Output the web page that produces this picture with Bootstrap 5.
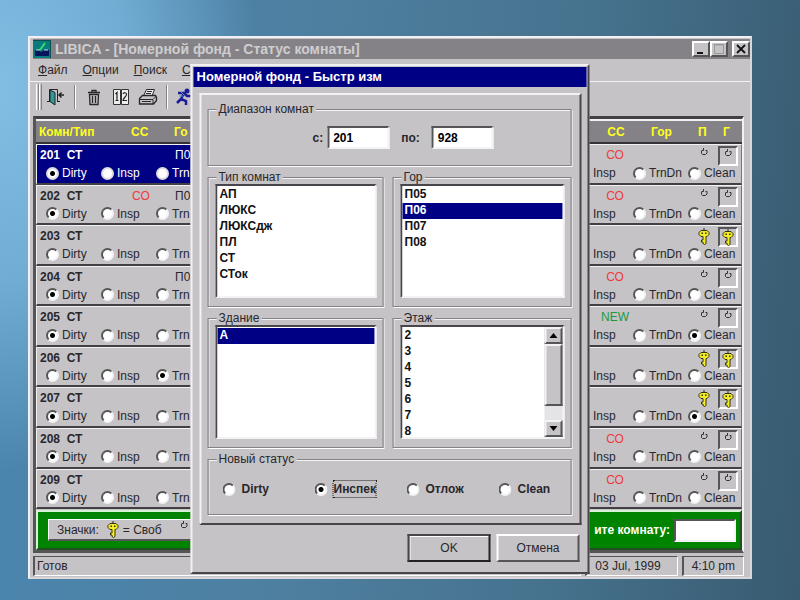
<!DOCTYPE html>
<html lang="ru">
<head>
<meta charset="utf-8">
<meta name="viewport" content="width=device-width, initial-scale=1">
<title>LIBICA - Номерной фонд</title>
<link href="https://cdn.jsdelivr.net/npm/bootstrap@5.3.0/dist/css/bootstrap.min.css" rel="stylesheet">
<style>
:root{--face:#c5c3c6;--dark:#424045;--mid:#848286;--lite:#f1f0f2;--navy:#000084}
body{font-family:"Liberation Sans",Arial,sans-serif;font-size:12px;line-height:16px;color:#29272b;
  background:radial-gradient(ellipse 260px 380px at 0 15%,#82bde4 0,rgba(122,182,222,.8) 50%,rgba(85,137,170,0) 100%),linear-gradient(95deg,#4a86b0 0,#4e7f9f 40%,#45718c 72%,#385b70 100%)}
.desk{padding:36px 48px 21px 28px}
.win{background:var(--face);border:2px solid var(--lite);border-right-color:#d9d7da;border-bottom-color:#d9d7da}
.win-title{background:var(--mid);color:#cfcdd0;height:20px;margin:1px 0 0 3px;font-size:14px}
.sys-btn{width:18px;height:16px;padding:0;background:var(--face);border:2px solid;border-color:#fff #555 #555 #fff;line-height:0}
.menu{height:23px;padding:0 8px;gap:15px;border-bottom:1px solid var(--lite)}
.menu a{color:#29272b;text-decoration:none}
.tools{height:34px;padding:0 6px 4px}
.tool{background:none;border:0;padding:0;line-height:0}
.grip{width:3px;height:26px;border-left:1px solid #fff;border-right:1px solid var(--mid)}
.vline{width:2px;height:24px;border-left:1px solid var(--mid);border-right:1px solid #fff}
.board{margin:0 6px 0 3px;border:3px solid;border-color:var(--dark) #f1f0f2 #555 #555;border-right-width:2px}
.heads{background:var(--mid);color:#ffff20;height:25px;border-top:2px solid var(--lite);border-bottom:2px solid #343236}
.room{flex:1 1 0;border:1px solid;border-color:var(--lite) #777 var(--dark) var(--lite);border-bottom-width:2px}
.room.on .lhalf{background:var(--navy);color:#fff}
.lhalf{width:155px;padding-left:3px}
.rhalf{width:153px}
.lgrid{display:grid;grid-template-columns:92px 43px 18px}
.rgrid{display:grid;grid-template-columns:54px 55px 21px 20px}
.lradios{display:grid;grid-template-columns:55px 55px 32px;padding-left:6px}
.rradios{display:grid;grid-template-columns:40px 55px 52px;padding-left:5px}
.line1{height:19px;padding-top:2px}
.opt{display:flex;align-items:center;gap:3px;height:18px}
.opt input{appearance:none;flex:none;width:13px;height:13px;margin:0;border-radius:50%;border:2px solid;border-color:#555 #f3f2f4 #f3f2f4 #555;background:#fff}
.opt input:checked{background:radial-gradient(circle,#000 0,#000 2px,#fff 3px)}
.on .lhalf .opt input{border-color:#ddd}
.slot{width:20px;height:20px;border:2px solid;border-color:#555 #fff #fff #555;line-height:0;margin-top:-1px}
.pic{line-height:0;padding-left:1px}
.bar{height:40px;background:#008400;border:2px solid;border-color:#d8f0d8 #234d23 #234d23 #d8f0d8;margin-top:1px}
.legend-box{width:155px;height:22px;margin-left:10px;padding-left:8px;background:var(--face);border:1px solid #fff;border-bottom:2px solid #555}
.field{background:#fff;border:2px solid;border-color:#555 #f3f2f4 #f3f2f4 #555;border-radius:0;height:23px;width:62px;padding:0 4px;outline:0;color:#000}
.stat{height:20px;margin:3px 6px 1px 3px;gap:4px}
.stat>div{border:1px solid;border-color:#555 #fff #fff #555;border-left-width:2px;padding:1px 2px}
.dlg{width:399px;top:26px;background:var(--face);border:2px solid;border-color:#f1f0f2 #48464b #48464b #f1f0f2;padding:1px}
.dlg-title{background:var(--navy);color:#fff;height:20px;font-size:13px;line-height:19px;padding-left:3px;margin:0}
.pane{margin:6px 5px 9px 6px;padding:7px 8px 8px 6px;border:2px solid;border-color:#f3f2f4 #48464b #48464b #f3f2f4;display:grid;gap:4px}
.pair{display:grid;grid-template-columns:176fr 179fr;gap:9px}
.group{border:1px solid var(--mid);box-shadow:1px 1px 0 #fff,inset 1px 1px 0 #f3f2f4;padding:0 6px 8px 7px;min-width:0}
.group legend{float:none;width:auto;font-size:12px;line-height:14px;height:14px;padding:0 2px;margin:0 0 0 1px;background:var(--face)}
.range{padding:10px 0 16px 97px;gap:12px}
.lbox{height:114px;border:2px solid;border-color:#48464b #f3f2f4 #f3f2f4 #48464b;background:#fff}
.lbox select{appearance:none;border:0;padding:1px 0 0;outline:0;background:#fff;width:100%;height:100%;overflow:hidden;color:#111;font-size:12px;border-radius:0}
.lbox option{height:16px;min-height:16px;line-height:16px;padding:0 2px;font-weight:700}
.lbox option:checked{background:#000084 linear-gradient(#000084,#000084);color:#fff;-webkit-text-fill-color:#fff}
.scroll{width:18px;background:#e4e3e5}
.sbtn,.thumb{background:var(--face);border:2px solid;border-color:#f3f2f4 #555 #555 #f3f2f4;padding:0;line-height:0}
.sbtn{height:17px}
.thumb{height:62px}
.status{display:grid;grid-template-columns:92px 92px 92px 1fr;padding:14px 0 16px 7px;font-weight:700}
.status .opt{gap:6px}
.focused{outline:1px dotted #222}
.pushes{gap:6px;padding:0 7px 9px 0}
.push{width:83px;height:28px;background:var(--face);border:2px solid;border-color:#fff #555 #555 #fff;padding:0;color:#29272b}
.push.main{border-color:#48464b #222 #222 #48464b;box-shadow:inset 1px 1px 0 #fff}
</style>
<script src="https://cdn.jsdelivr.net/npm/bootstrap@5.3.0/dist/js/bootstrap.bundle.min.js"></script>
</head>
<body>
<svg width="0" height="0" class="position-absolute" aria-hidden="true">
  <symbol id="key" viewBox="0 0 12 17"><path d="M6 0v2" stroke="#222" fill="none"/><path d="M3 2.500h6l2 2v2l-2 2H8v7L6.500 16.500 5 15.500V14H3.500v-2H5V8.500H3l-2-2v-2z" fill="#f4ec25" stroke="#34320c"/><path d="M3.500 4.500H5V6H3.500zM7 4.500h1.500V6H7z" fill="#34320c"/></symbol>
  <symbol id="hook" viewBox="0 0 12 10"><path d="M5.500 1v2.500H4M3.500 3.500v3l1 1h3l1.500-1.500V3.500H7.500" fill="none" stroke="#333"/></symbol>
</svg>
<div class="desk min-vh-100 d-flex">
<main class="win flex-grow-1 d-flex flex-column position-relative">
  <header class="win-title d-flex align-items-center fw-bold">
    <svg width="18" height="18" viewBox="0 0 18 18" class="me-1 flex-shrink-0"><path d="M0 0h18v18H0z" fill="#087c7c"/><path d="M0 .5h17.500V18" fill="none" stroke="#065050"/><path d="M2 10h4l2 2 3-2h5v6H2z" fill="#06165c"/><path d="M7 10 12 3" stroke="#35db72" stroke-width="2"/><path d="M3 10h4M11 10h4" stroke="#bfe7ee"/></svg>
    <span class="text-nowrap">LIBICA - [Номерной фонд - Статус комнаты]</span>
    <div class="ms-auto d-flex">
      <button class="sys-btn" aria-label="Свернуть"><svg width="14" height="12"><path d="M3 10h6" stroke="#111" stroke-width="2"/></svg></button>
      <button class="sys-btn me-1" aria-label="Развернуть"><svg width="14" height="12"><path d="M2.500 1.500h9v9h-9z" fill="none" stroke="#999"/><path d="M2 2h10" stroke="#999"/></svg></button>
      <button class="sys-btn" aria-label="Закрыть"><svg width="14" height="12"><path d="m3 2 8 8m0-8-8 8" stroke="#111" stroke-width="1.800"/></svg></button>
    </div>
  </header>
  <nav class="menu d-flex align-items-center"><a href="#"><u>Ф</u>айл</a><a href="#"><u>О</u>пции</a><a href="#"><u>П</u>оиск</a><a href="#"><u>С</u></a></nav>
  <div class="tools d-flex align-items-center">
    <span class="grip"></span><span class="grip me-1"></span>
    <button class="tool" aria-label="Выход"><svg width="20" height="18" viewBox="0 0 20 18"><path d="M3.500 13V1.500h8V13M1 13.500h3m7 0h3" fill="none" stroke="#222"/><path d="m4 2 5 2.500V17l-5-3.500z" fill="#2a9a9a" stroke="#222"/><path d="M18 7h-5m2.500-2.500L13 7l2.500 2.500" fill="none" stroke="#222" stroke-width="1.500"/></svg></button>
    <span class="vline ms-2 me-2"></span>
    <button class="tool" aria-label="Удалить"><svg width="20" height="18" viewBox="0 0 16 18"><path d="M2 4.500h12M6 4V2.500h4V4M3.500 6.500h9l-.5 10H4zM6.500 8v7m3-7v7" fill="none" stroke="#29272b" stroke-width="1.300"/></svg></button>
    <button class="tool ms-2" aria-label="Календарь"><svg width="18" height="18" viewBox="0 0 18 18"><path d="M1.500 1.500h7v15h-7zM9.500 1.500h7v15h-7z" fill="#eee" stroke="#333"/><path d="m3.500 6 1.500-1.500V12M3.500 12.500h3M11 6c1-2 3.500-1.500 3.500.5 0 2-3 3-3.500 6h4" fill="none" stroke="#222" stroke-width="1.200"/></svg></button>
    <button class="tool ms-2" aria-label="Печать"><svg width="20" height="18" viewBox="0 0 20 18"><path d="m5.500 8 3-6.500h8L14 8" fill="#eee" stroke="#29272b"/><path d="M1.500 10.500 4.500 7.500h13l1 2v3l-3 3.500h-14z" fill="#c5c3c6" stroke="#29272b" stroke-width="1.300"/><path d="M2 11.500h13l3-3M9 3.500h5M8 5.500h5M4 13.500h9M15 12v4" stroke="#29272b" fill="none"/></svg></button>
    <span class="vline ms-2 me-2"></span>
    <button class="tool" aria-label="Быстро"><svg width="16" height="18" viewBox="0 0 16 18"><circle cx="11" cy="3" r="2.500" fill="#1c1c96"/><path d="M2 5h6l3 3h4M8 5l-3 6 5 2v4M5 11l-4 4" fill="none" stroke="#1c1c96" stroke-width="2.500"/><path d="m5 4 3 3M3 8h4" stroke="#59b" /></svg></button>
  </div>
  <section class="board flex-grow-1 d-flex flex-column">
    <div class="heads d-flex justify-content-between align-items-center fw-bold">
      <div class="lhalf lgrid"><span>Комн/Тип</span><span>СС</span><span>Го</span></div>
      <div class="rhalf rgrid"><span class="text-center">СС</span><span class="ps-2">Гор</span><span>П</span><span class="ps-1">Г</span></div>
    </div>
    <div id="rooms" class="flex-grow-1 d-flex flex-column"></div>
    <div class="bar d-flex justify-content-between align-items-center fw-bold">
      <div class="legend-box d-flex align-items-center fw-normal"><span>Значки:</span><svg width="12" height="17" class="ms-2 me-1"><use href="#key"/></svg><span>= Своб</span><svg width="12" height="10" class="ms-3 align-self-start"><use href="#hook"/></svg></div>
      <div class="d-flex align-items-center gap-1 pe-1"><label for="find" class="text-white">ите комнату:</label><input id="find" class="field"></div>
    </div>
  </section>
  <footer class="stat d-flex"><div class="flex-grow-1">Готов</div><div class="ps-2 pe-3">03 Jul, 1999</div><div class="px-2">4:10 pm</div></footer>

  <section class="dlg position-absolute start-50 translate-middle-x" role="dialog" aria-labelledby="dt">
    <h1 class="dlg-title fw-bold" id="dt">Номерной фонд - Быстр изм</h1>
    <div class="pane">
      <fieldset class="group pb-0"><legend>Диапазон комнат</legend>
        <div class="range d-flex align-items-center fw-bold">
          <div class="d-flex align-items-center gap-1"><label for="from">с:</label><input id="from" class="field fw-bold" value="201"></div>
          <label for="to">по:</label><input id="to" class="field fw-bold" value="928">
        </div>
      </fieldset>
      <div class="pair">
        <fieldset class="group"><legend id="l1">Тип комнат</legend><div class="lbox"><select size="7" aria-labelledby="l1"><option>АП</option><option>ЛЮКС</option><option>ЛЮКСдж</option><option>ПЛ</option><option>СТ</option><option>СТок</option></select></div></fieldset>
        <fieldset class="group"><legend id="l2">Гор</legend><div class="lbox"><select size="7" aria-labelledby="l2"><option>П05</option><option selected>П06</option><option>П07</option><option>П08</option></select></div></fieldset>
      </div>
      <div class="pair">
        <fieldset class="group"><legend id="l3">Здание</legend><div class="lbox"><select size="7" aria-labelledby="l3"><option selected>А</option></select></div></fieldset>
        <fieldset class="group"><legend id="l4">Этаж</legend><div class="lbox d-flex"><select size="7" aria-labelledby="l4"><option>2</option><option>3</option><option>4</option><option>5</option><option>6</option><option>7</option><option>8</option></select>
          <div class="scroll d-flex flex-column flex-shrink-0"><button class="sbtn" aria-label="Вверх"><svg width="8" height="5"><path d="M0 5h8L4 0z"/></svg></button><div class="thumb"></div><button class="sbtn mt-auto" aria-label="Вниз"><svg width="8" height="5"><path d="M0 0h8L4 5z"/></svg></button></div></div></fieldset>
      </div>
      <fieldset class="group pb-0"><legend>Новый статус</legend>
        <div class="status"><label class="opt"><input type="radio" name="ns"><span>Dirty</span></label><label class="opt"><input type="radio" name="ns" checked><span class="focused">Инспек</span></label><label class="opt"><input type="radio" name="ns"><span>Отлож</span></label><label class="opt"><input type="radio" name="ns"><span>Clean</span></label></div>
      </fieldset>
    </div>
    <div class="pushes d-flex justify-content-end"><button class="push main">OK</button><button class="push">Отмена</button></div>
  </section>
</main>
</div>
<script>
const rooms = [
  {n:201, g:'П0', l:0, cc:'СО', on:true}, {n:202, c:'СО', g:'П0', l:0, cc:'СО'}, {n:203, l:-1, key:true},
  {n:204, g:'П0', l:0, cc:'СО'}, {n:205, l:0, cc:'NEW', r:true}, {n:206, l:2, key:true},
  {n:207, l:0, key:true, r:true}, {n:208, l:0, cc:'СО'}, {n:209, l:0, cc:'СО'}];
const radio = (name, text, on) => `<label class="opt"><input type="radio" name="${name}"${on ? ' checked' : ''}><span>${text}</span></label>`;
const tone = t => t === 'NEW' ? '#1c9a3c' : '#ee3b3b';
document.getElementById('rooms').innerHTML = rooms.map(r => {
  const pic = r.key ? '<svg width="12" height="17"><use href="#key"/></svg>' : '<svg width="12" height="10"><use href="#hook"/></svg>';
  return `<div class="room d-flex justify-content-between ${r.on ? 'on' : ''}">
    <div class="lhalf"><div class="lgrid line1"><b>${r.n}&nbsp; СТ</b><span style="color:${tone('')}">${r.c || ''}</span><span>${r.g || ''}</span></div>
      <div class="lradios">${['Dirty', 'Insp', 'Trn'].map((t, i) => radio('a' + r.n, t, i === r.l)).join('')}</div></div>
    <div class="rhalf"><div class="rgrid line1"><span class="text-center" style="color:${tone(r.cc)}">${r.cc || ''}</span><span></span><span class="pic">${pic}</span><span class="slot text-center">${pic}</span></div>
      <div class="rradios"><span class="opt">Insp</span>${radio('b' + r.n, 'TrnDn', false)}${radio('b' + r.n, 'Clean', r.r)}</div></div></div>`;
}).join('');
</script>
</body>
</html>
